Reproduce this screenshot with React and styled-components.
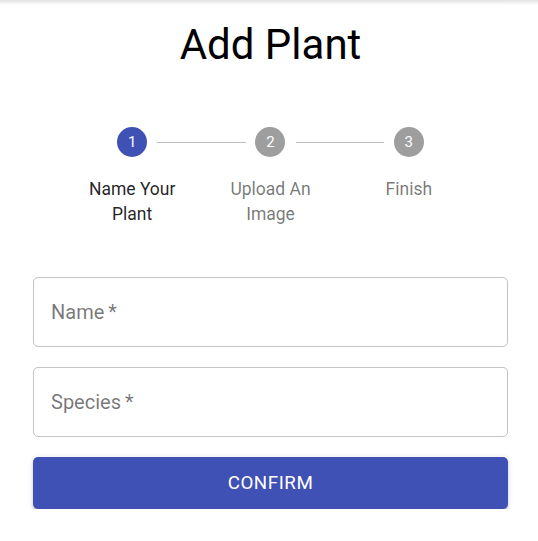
import React from 'react';
import styled, { createGlobalStyle } from 'styled-components';

const GlobalStyle = createGlobalStyle`
  body {
    margin: 0;
    background: #fff;
    font-family: Roboto, "Liberation Sans", sans-serif;
  }
`;

const TopShade = styled.div`
  height: 5px;
  background: linear-gradient(#e2e2e2, #fff);
`;

const Page = styled.main`
  width: 475px;
  padding: 0 30px 0 33px;
`;

const Title = styled.h1`
  margin: 14px 0 0;
  font-size: 42px;
  line-height: 52.5px;
  font-weight: 400;
  letter-spacing: 0;
  text-align: center;
  color: #000;
`;

const Stepper = styled.ol`
  display: flex;
  margin: 25px 0 0;
  padding: 30px;
  list-style: none;
`;

const Step = styled.li`
  position: relative;
  flex: 1;
  padding: 0 10px;
  display: flex;
  flex-direction: column;
  align-items: center;
`;

const Connector = styled.span`
  position: absolute;
  top: 15px;
  left: calc(-50% + 25px);
  right: calc(50% + 25px);
  border-top: 1px solid #bdbdbd;
`;

const Circle = styled.span`
  width: 30px;
  height: 30px;
  border-radius: 50%;
  background: ${p => (p.$active ? '#3f51b5' : '#9e9e9e')};
  color: #fff;
  font-size: 15px;
  line-height: 30px;
  text-align: center;
`;

const StepLabel = styled.span`
  margin-top: 20px;
  font-size: 17.5px;
  line-height: 25px;
  text-align: center;
  color: ${p => (p.$active ? 'rgba(0, 0, 0, 0.87)' : 'rgba(0, 0, 0, 0.54)')};
`;

const Form = styled.form`
  display: flex;
  flex-direction: column;
  gap: 20px;
  margin-top: 20px;
`;

const Field = styled.label`
  box-sizing: border-box;
  height: 70px;
  display: flex;
  align-items: center;
  padding: 0 17px;
  border: 1px solid rgba(0, 0, 0, 0.23);
  border-radius: 5px;
  font-size: 20px;
  line-height: 1;
  color: rgba(0, 0, 0, 0.54);
`;

const Button = styled.button`
  height: 52px;
  border: 0;
  border-radius: 5px;
  background: #3f51b5;
  color: #fff;
  font-family: inherit;
  font-size: 18.75px;
  font-weight: 400;
  letter-spacing: 0.55px;
  text-transform: uppercase;
  box-shadow: 0 3.75px 1.25px -2.5px rgba(0, 0, 0, 0.2),
    0 2.5px 2.5px 0 rgba(0, 0, 0, 0.14), 0 1.25px 6.25px 0 rgba(0, 0, 0, 0.12);
`;

const steps = ['Name Your Plant', 'Upload An Image', 'Finish'];

export default function App() {
  return (
    <>
      <GlobalStyle />
      <TopShade />
      <Page>
        <Title>Add Plant</Title>
        <Stepper>
          {steps.map((label, i) => (
            <Step key={label}>
              {i > 0 && <Connector />}
              <Circle $active={i === 0}>{i + 1}</Circle>
              <StepLabel $active={i === 0}>{label}</StepLabel>
            </Step>
          ))}
        </Stepper>
        <Form>
          <Field>Name&thinsp;*</Field>
          <Field>Species&thinsp;*</Field>
          <Button type="button">Confirm</Button>
        </Form>
      </Page>
    </>
  );
}
